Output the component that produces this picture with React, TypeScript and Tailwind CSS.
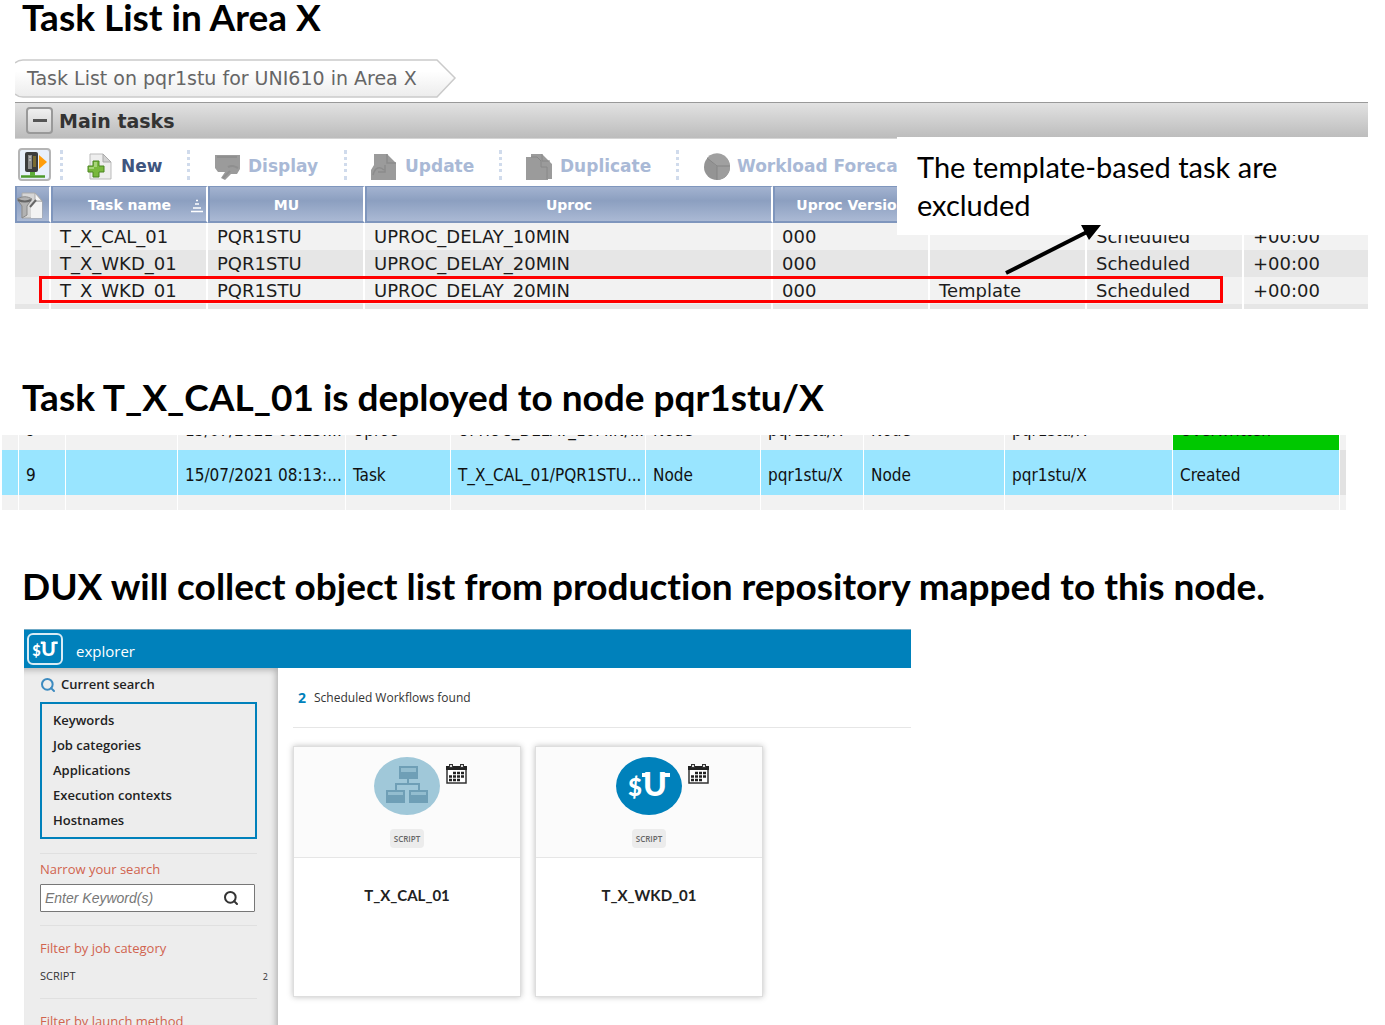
import React from "react";
import { Search } from "lucide-react";

const tasks = [
  { name: "T_X_CAL_01", mu: "PQR1STU", uproc: "UPROC_DELAY_10MIN", version: "000", type: "", status: "Scheduled", offset: "+00:00" },
  { name: "T_X_WKD_01", mu: "PQR1STU", uproc: "UPROC_DELAY_20MIN", version: "000", type: "", status: "Scheduled", offset: "+00:00" },
  { name: "T_X_WKD_01", mu: "PQR1STU", uproc: "UPROC_DELAY_20MIN", version: "000", type: "Template", status: "Scheduled", offset: "+00:00" },
];

const deployments = [
  ["", "9", "", "15/07/2021 08:13:...", "Uproc", "UPROC_DELAY_10MIN/...", "Node", "pqr1stu/X", "Node", "pqr1stu/X", "Overwritten", ""],
  ["", "9", "", "15/07/2021 08:13:...", "Task", "T_X_CAL_01/PQR1STU...", "Node", "pqr1stu/X", "Node", "pqr1stu/X", "Created", ""],
  ["", "", "", "", "", "", "", "", "", "", "", ""],
];

const filters = ["Keywords", "Job categories", "Applications", "Execution contexts", "Hostnames"];

function Heading({ children }: any) {
  return <h2 className="pl-[22px] font-['Lato'] text-[37px] leading-[44px] font-bold whitespace-nowrap text-black [font-variant-ligatures:none]">{children}</h2>;
}

function ServerIcon() {
  return (
    <svg width="29" height="29" viewBox="0 0 29 29" className="shrink-0">
      <path d="M1 26.5h24" stroke="#4c9a2a" strokeWidth="2.5" />
      <path d="M10 21h5v5h-5z" fill="#5fae3a" />
      <rect x="5" y="2" width="13" height="20" rx="2" fill="#3c3c3c" />
      <rect x="8" y="5" width="4" height="14" fill="#8d8d8d" />
      <path d="M9 7h2M9 10h2" stroke="#ddd" />
      <path d="M13 6h3v11h-3z" fill="#7a6a30" />
      <path d="M19 5l8 7-8 7z" fill="#ff9d0a" />
    </svg>
  );
}

function NewIcon() {
  return (
    <svg width="27" height="28" viewBox="0 0 27 28">
      <path d="M3 1h13l8 8v17H3z" fill="#eeeeee" stroke="#bbb" />
      <path d="M16 1v8h8z" fill="#d2d2d2" stroke="#aaa" />
      <path d="M6 8h6v5h5v6h-5v5H6v-5H1v-6h5z" fill="#79b83c" stroke="#4a8520" />
      <path d="M7 9h3v5H7zM2 14h5v2H2z" fill="#a8d47a" />
    </svg>
  );
}

function DisplayIcon() {
  return (
    <svg width="27" height="28" viewBox="0 0 27 28">
      <path d="M1 2h25v14l-3 5h-6l-6 6-4-2 4-6H4l-3-4z" fill="#9b9b9b" />
      <path d="M3 4h20M14 14c4-2 6-1 10 1M9 25l7-7" stroke="#8f8f8f" strokeWidth="2" fill="none" />
    </svg>
  );
}

function UpdateIcon() {
  return (
    <svg width="27" height="28" viewBox="0 0 27 28">
      <path d="M3 1h13l9 9v17H0V17l3-5z" fill="#9b9b9b" />
      <path d="M16 1v9h9M2 22c2-8 7-9 11-5M14 12v7H7" stroke="#8c8c8c" strokeWidth="1.5" fill="none" />
    </svg>
  );
}

function DuplicateIcon() {
  return (
    <svg width="27" height="28" viewBox="0 0 27 28">
      <path d="M0 4h5V1h11l10 10v15h-4v1H0z" fill="#9b9b9b" />
      <path d="M5 4h6l4 4v6h6v12M16 1v7h8" stroke="#888" fill="none" />
    </svg>
  );
}

function PieIcon() {
  return (
    <svg width="27" height="28" viewBox="0 0 27 28">
      <circle cx="14" cy="14" r="13" fill="#949494" />
      <path d="M14 14L4 5A13 13 0 0 1 27 13z" fill="#a0a0a0" />
      <path d="M14 14v13A13 13 0 0 0 27 13z" fill="#9d9d9d" />
      <path d="M4 5l10 8h13M14 13v14" stroke="#858585" fill="none" />
    </svg>
  );
}

function FilterIcon() {
  return (
    <svg width="27" height="28" viewBox="0 0 27 28">
      <path d="M5 1h13l7 8v17H5z" fill="#d6d6d6" stroke="#aaa" />
      <path d="M14 14l4-4h7v16H14z" fill="#f3f3f3" />
      <path d="M18 1v8h7z" fill="#f6f6f6" stroke="#aaa" />
      <path d="M0 7c6-3 10-3 15 0l-5 7v9l-5 3V14z" fill="#b2b2b2" stroke="#8a8a8a" />
      <path d="M1 8c5 2 9 2 13 0" stroke="#666" strokeWidth="2" fill="none" />
      <path d="M13 15l6-7" stroke="#666" strokeWidth="2" />
    </svg>
  );
}

function SortIcon() {
  return (
    <svg width="12" height="14" viewBox="0 0 12 14" className="absolute right-[3px] top-[12px]">
      <path d="M5 1.5h2M4 5h4M2 9h8M0 12.5h12" stroke="white" strokeWidth="1.5" />
    </svg>
  );
}

function DollarMark({ className }: any) {
  return (
    <svg viewBox="0 0 42 28" className={className} fill="white">
      <text x="0" y="24" fontFamily="Lato, sans-serif" fontWeight="900" fontSize="24">$</text>
      <text x="15" y="24" fontFamily="Lato, sans-serif" fontWeight="900" fontSize="32">U</text>
      <path d="M14 1h7v4h-7zM34 1h8v4h-8z" />
    </svg>
  );
}

function WorkflowIcon() {
  return (
    <svg width="66" height="58" viewBox="0 0 66 58">
      <ellipse cx="33" cy="29" rx="33" ry="29" fill="#a0c8d9" />
      <g fill="#6f9fb6">
        <path d="M25 9h19v13H25zM12 33h19v13H12zM35 33h19v13H35z" />
        <path d="M33 22h2v4h11v7h-2v-5H23v5h-2v-7h12z" />
      </g>
      <path d="M27 11h15v4H27zM14 35h15v3H14zM37 35h15v3H37z" fill="#93bdcf" />
    </svg>
  );
}

function DollarIcon() {
  return (
    <div className="flex h-[58px] w-[66px] items-center justify-center rounded-[50%] bg-[#0081bb]">
      <DollarMark className="h-[28px] w-[42px]" />
    </div>
  );
}

function CalendarIcon() {
  return (
    <svg width="21" height="20" viewBox="0 0 21 20" className="absolute left-[72px] top-[7px]">
      <rect x="1" y="3" width="19" height="16" fill="white" stroke="#333" strokeWidth="1.5" />
      <path d="M0 2h21v4H0z" fill="#222" />
      <path d="M3 0h4v4H3zM14 0h4v4h-4z" fill="#333" />
      <path d="M4 1h2v2H4zM15 1h2v2h-2z" fill="#ddd" />
      <path d="M7 9h12M3 12.5h16M3 16h12" stroke="#222" strokeWidth="2.5" strokeDasharray="3 1" />
    </svg>
  );
}

const tools = [
  { label: "New", icon: <NewIcon />, width: "w-[127px]" },
  { label: "Display", icon: <DisplayIcon />, width: "w-[157px]" },
  { label: "Update", icon: <UpdateIcon />, width: "w-[155px]" },
  { label: "Duplicate", icon: <DuplicateIcon />, width: "w-[177px]" },
  { label: "Workload Forecast", icon: <PieIcon />, width: "w-[260px]" },
];

function Toolbar() {
  return (
    <div className="flex h-[47px] items-center overflow-hidden pt-[5px] pl-[3px] pb-[1px]">
      <button aria-label="Connect" className="mr-[9px] flex h-[33px] w-[33px] shrink-0 items-center justify-center rounded-[4px] border-2 border-[#b5b5b5] bg-[#e9f0fa]">
        <ServerIcon />
      </button>
      {tools.map((tool, i) => (
        <div key={tool.label} className={`flex shrink-0 items-center ${tool.width}`}>
          <span className="h-[30px] border-l-[3px] border-dotted border-[#d0dbec]"></span>
          <button
            disabled={i > 0}
            className={`ml-[24px] flex items-center gap-[7px] pt-[5px] text-[17px] font-bold whitespace-nowrap ${i > 0 ? "text-[#a9b9d6]" : "text-[#3f557f]"}`}
          >
            {tool.icon}
            {tool.label}
          </button>
        </div>
      ))}
    </div>
  );
}

function TaskTable() {
  const head = "relative h-[37px] border-2 border-t border-[#7f96bd] border-r-white bg-linear-to-b from-[#a3b3d0] via-[#8c9fc0] via-40% to-[#aab9d4] p-0 pt-[3px] text-center text-[14px] font-bold text-white whitespace-nowrap";
  const cell = "h-[27px] border-r-2 border-white p-0 pl-[9px] leading-[27px] whitespace-nowrap";
  return (
    <table className="w-full table-fixed border-separate border-spacing-0 text-[18px] text-[#1c1c1c]">
      <colgroup>
        <col className="w-[36px]" />
        <col className="w-[157px]" />
        <col className="w-[157px]" />
        <col className="w-[408px]" />
        <col className="w-[157px]" />
        <col className="w-[157px]" />
        <col className="w-[157px]" />
        <col />
      </colgroup>
      <thead>
        <tr>
          <th className={head}><FilterIcon /></th>
          <th className={head}>Task name<SortIcon /></th>
          <th className={head}>MU</th>
          <th className={head}>Uproc</th>
          <th className={head}>Uproc Version</th>
          <th className={head}></th>
          <th className={head}></th>
          <th className={head}></th>
        </tr>
      </thead>
      <tbody>
        {tasks.map((task, i) => (
          <tr key={i} className="odd:bg-[#f2f2f2] even:bg-[#e6e6e6]">
            <td className={cell}></td>
            <td className={cell}>{task.name}</td>
            <td className={cell}>{task.mu}</td>
            <td className={cell}>{task.uproc}</td>
            <td className={cell}>{task.version}</td>
            <td className={cell}>{task.type}</td>
            <td className={cell}>{task.status}</td>
            <td className="p-0 pl-[9px]">{task.offset}</td>
          </tr>
        ))}
        <tr className="bg-[#e6e6e6]">
          {[0, 1, 2, 3, 4, 5, 6].map(i => <td key={i} className="h-[5px] border-r-2 border-white p-0"></td>)}
          <td className="p-0"></td>
        </tr>
      </tbody>
    </table>
  );
}

function DeploymentTable() {
  return (
    <div className="ml-[2px] mr-[38px] flex h-[75px] items-center overflow-hidden">
      <table className="w-full shrink-0 table-fixed border-separate border-spacing-0 font-['DejaVu_Sans_Condensed','DejaVu_Sans',sans-serif] text-[17px] text-[#111]">
        <colgroup>
          <col className="w-[17px]" />
          <col className="w-[47px]" />
          <col className="w-[112px]" />
          <col className="w-[168px]" />
          <col className="w-[105px]" />
          <col className="w-[195px]" />
          <col className="w-[115px]" />
          <col className="w-[103px]" />
          <col className="w-[141px]" />
          <col className="w-[168px]" />
          <col className="w-[167px]" />
          <col />
        </colgroup>
        <tbody>
          {deployments.map((row, r) => (
            <tr key={r} className={r === 1 ? "bg-[#99e5ff]" : "bg-[#f2f2f2]"}>
              {row.map((text, c) => (
                <td
                  key={c}
                  className={`h-[45px] border-r border-white p-0 pt-[7px] whitespace-nowrap ${c > 0 && c < 11 ? "pl-[7px]" : ""} ${text === "Overwritten" ? "bg-[#00c800]" : ""} ${r === 1 && c === 11 ? "bg-[#e2e2e2]" : ""}`}
                >
                  {text}
                </td>
              ))}
            </tr>
          ))}
        </tbody>
      </table>
    </div>
  );
}

function WorkflowCard({ name, icon }: any) {
  return (
    <article className="h-[251px] w-[228px] border border-[#dedede] bg-white shadow-[0_0_6px_rgba(0,0,0,0.25)]">
      <div className="flex h-[111px] flex-col items-center border-b border-[#e6e6e6] bg-[#fbfbfb] pt-[10px]">
        <div className="relative">
          {icon}
          <CalendarIcon />
        </div>
        <span className="mt-[14px] rounded-[4px] bg-[#ececec] px-[4px] text-[8px] leading-[19px] font-semibold text-[#666]">SCRIPT</span>
      </div>
      <h3 className="pt-[27px] text-center font-['Lato'] text-[15px] leading-[20px] font-bold text-[#222]">{name}</h3>
    </article>
  );
}

function Explorer() {
  return (
    <section className="ml-[24px] flex min-h-0 w-full max-w-[887px] flex-1 flex-col font-['Open_Sans',sans-serif] text-[13px] text-[#333]">
      <header className="flex h-[39px] shrink-0 items-center gap-[13px] border-t border-[#6fa9c6] bg-[#0081bb] pl-[3px] text-white">
        <div className="flex h-[32px] w-[36px] items-center justify-center rounded-[6px] border-2 border-[#d9ecf5]">
          <DollarMark className="h-[17px] w-[26px]" />
        </div>
        <span className="pt-[4px] text-[15px]">explorer</span>
      </header>
      <div className="flex min-h-0 flex-1">
        <aside className="w-[254px] shrink-0 bg-[#ededed] pl-[16px] shadow-[inset_-4px_4px_6px_-2px_rgba(0,0,0,0.25)]">
          <div className="flex h-[34px] items-center gap-[5px] font-semibold text-[#222]">
            <Search className="h-[16px] w-[16px] text-[#3d8bc0]" strokeWidth={3} />
            Current search
          </div>
          <ul className="mr-[21px] flex h-[137px] flex-col justify-center border-2 border-[#0081bb] pl-[11px] font-semibold leading-[25px] text-[#222]">
            {filters.map(filter => <li key={filter}>{filter}</li>)}
          </ul>
          <div className="mr-[21px] mt-[14px] border-t border-[#e0e0e0] pt-[5px] pb-[1px] text-[#d1644f]">
            <label htmlFor="keyword" className="block leading-[20px]">Narrow your search</label>
          </div>
          <div className="mr-[23px] mt-[4px] flex h-[28px] items-center rounded-[1px] border border-[#777] bg-white pr-[15px]">
            <input
              id="keyword"
              placeholder="Enter Keyword(s)"
              className="min-w-0 flex-1 pl-[4px] font-['Liberation_Sans'] text-[14px] italic outline-none placeholder:text-[#777]"
            />
            <button aria-label="Search"><Search className="h-[16px] w-[16px] text-[#333]" strokeWidth={3} /></button>
          </div>
          <h4 className="mr-[21px] mt-[13px] border-t border-[#e0e0e0] pt-[12px] leading-[20px] text-[#d1644f]">Filter by job category</h4>
          <div className="mr-[10px] mt-[8px] flex items-center justify-between leading-[18px]">
            <span className="text-[11px]">SCRIPT</span>
            <span className="pt-[2px] text-[9px]">2</span>
          </div>
          <h4 className="mr-[21px] mt-[12px] border-t border-[#e0e0e0] pt-[12px] leading-[20px] text-[#d1644f]">Filter by launch method</h4>
        </aside>
        <main className="flex-1 pl-[15px]">
          <p className="flex h-[60px] items-center gap-[8px] border-b border-[#e6e6e6] pl-[5px] text-[12px]">
            <b className="text-[14px] text-[#0081bb]">2</b>
            Scheduled Workflows found
          </p>
          <div className="flex gap-[14px] pt-[18px]">
            <WorkflowCard name="T_X_CAL_01" icon={<WorkflowIcon />} />
            <WorkflowCard name="T_X_WKD_01" icon={<DollarIcon />} />
          </div>
        </main>
      </div>
    </section>
  );
}

export default function App() {
  return (
    <div className="flex h-screen flex-col overflow-hidden bg-white font-['DejaVu_Sans',sans-serif]">
      <div className="-mt-[5px] shrink-0 pb-[19px]">
        <Heading>Task List in Area X</Heading>
      </div>
      <section className="relative ml-[15px] mr-[17px] shrink-0">
        <div className="relative flex h-[40px] w-[442px] items-center pl-[12px] text-[19px] text-[#666] whitespace-nowrap">
          <svg viewBox="0 0 442 40" className="absolute inset-0 h-full w-full">
            <defs>
              <linearGradient id="crumb" x1="0" y1="0" x2="0" y2="1">
                <stop offset="0.3" stopColor="#fff" />
                <stop offset="1" stopColor="#ececec" />
              </linearGradient>
            </defs>
            <path d="M0 5Q3 2 8 2H422L440 20L422 39H8Q3 39 0 36" fill="url(#crumb)" stroke="#cacaca" strokeWidth="1.5" />
          </svg>
          <span className="relative">Task List on pqr1stu for UNI610 in Area X</span>
        </div>
        <div className="mt-[4px] flex h-[37px] items-center gap-[6px] border-y border-t-[#999] border-b-[#d5d5d5] bg-linear-to-b from-[#e2e2e2] to-[#bcbcbc] pl-[11px] text-[19px] font-bold text-[#333]">
          <button aria-label="Collapse" className="flex h-[27px] w-[27px] items-center justify-center rounded-[4px] border-2 border-[#999] bg-linear-to-b from-[#f0f0f0] to-[#cfcfcf]">
            <span className="h-[3px] w-[14px] bg-[#555]"></span>
          </button>
          <span className="pt-[2px]">Main tasks</span>
        </div>
        <Toolbar />
        <TaskTable />
        <div className="absolute bottom-[6px] left-[24px] h-[27px] w-[1184px] border-3 border-[#ff0000]"></div>
        <div className="absolute left-[882px] right-0 top-[79px] h-[98px] bg-white pl-[20px] pt-[11px] font-['Lato'] text-[29px] leading-[38px] text-black">
          The template-based task are
          <br />
          excluded
        </div>
        <svg width="100" height="54" viewBox="0 0 100 54" className="absolute bottom-[33px] left-[988px]">
          <path d="M3 51L84 10" stroke="black" strokeWidth="4" />
          <path d="M98 3H78L86 18z" fill="black" />
        </svg>
      </section>
      <div className="shrink-0 pt-[66px] pb-[16px]">
        <Heading>Task T_X_CAL_01 is deployed to node pqr1stu/X</Heading>
      </div>
      <DeploymentTable />
      <div className="shrink-0 pt-[54px] pb-[21px]">
        <Heading>DUX will collect object list from production repository mapped to this node.</Heading>
      </div>
      <Explorer />
    </div>
  );
}
